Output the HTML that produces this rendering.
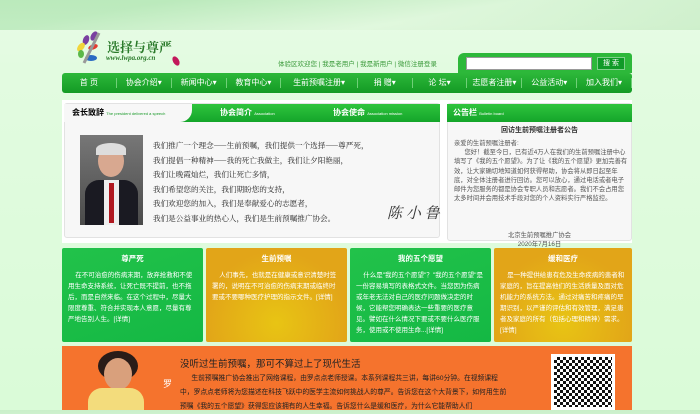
<!DOCTYPE html><html><head><meta charset="utf-8"><style>
*{margin:0;padding:0;box-sizing:border-box}
body{width:700px;height:410px;overflow:hidden;background:linear-gradient(#c9efc9 0,#e6fbe4 25px,#e2fbe0 70px,#dafbd8 100%);font-family:"Liberation Sans","Noto Sans CJK SC",sans-serif;position:relative}
.a{position:absolute}
.nav{left:62px;top:73px;width:570px;height:20px;background:linear-gradient(#2db83a,#139a24);border-radius:3px;color:#fff;font-size:8px;display:flex;align-items:center}
.nav span{flex:1;text-align:center;border-right:1px solid #6fd078;line-height:10px}
.box{left:62px;top:100px;width:570px;height:143px;background:#fff}
.panel{background:#f7f7f7;border:1px solid #e2e2e2;border-radius:3px}
.hd{height:18px;background:linear-gradient(#2fc43d,#14a52a);color:#fff;font-size:8px;font-weight:bold;line-height:18px}
.hd small{font-size:4px;font-weight:normal}
.card{top:248px;width:141px;height:94px;border-radius:2px;color:#fff;font-size:6.5px;line-height:11px;padding:5px 6px}
.card b{display:block;text-align:center;font-size:7.5px;margin-bottom:6px}
.g{background:linear-gradient(160deg,#22c24a,#14b844)}
.o{background:radial-gradient(circle at 50% 80%,#e8c414,#e2a518 70%)}
.poem{font-family:"Noto Serif CJK SC",serif;font-size:7.6px;color:#222;line-height:14.6px}
</style></head><body>
<div class="a" style="left:0;top:0;width:700px;height:30px;background:linear-gradient(170deg,#b7e8b8 20%,#dff7dc 60%,#c8ecc5);opacity:.8"></div>
<svg class="a" style="left:72px;top:30px" width="40" height="36"><ellipse cx="22" cy="6" rx="3" ry="5" fill="#7a3fa0" transform="rotate(30 22 6)"/><ellipse cx="14" cy="10" rx="3" ry="5" fill="#7a3fa0" transform="rotate(20 14 10)"/><ellipse cx="9" cy="17" rx="3" ry="5" fill="#f1d53b" transform="rotate(40 9 17)"/><ellipse cx="9" cy="24" rx="3" ry="4" fill="#5bb84a"/><ellipse cx="21" cy="17" rx="5" ry="2.5" fill="#e43a2f" transform="rotate(-20 21 17)"/><ellipse cx="19" cy="28" rx="6" ry="3" fill="#2a6bc3"/><path d="M27 3 L12 33" stroke="#999" stroke-width="3"/></svg>
<div class="a" style="left:107px;top:37px;font-size:13px;color:#2a7a2a;font-family:'Noto Serif CJK SC',serif;font-weight:bold">选择与尊严</div>
<div class="a" style="left:106px;top:54px;font-size:7px;color:#2a7a2a;font-style:italic;font-weight:bold;font-family:'Liberation Serif',serif">www.lwpa.org.cn</div>
<svg class="a" style="left:170px;top:55px" width="12" height="12"><ellipse cx="6" cy="6" rx="3" ry="5" fill="#c2185b" transform="rotate(-30 6 6)"/></svg>
<div class="a" style="left:278px;top:58px;font-size:6.5px;color:#3a9a3a">体验区欢迎您 | 我是老用户 | 我是新用户 | 微信注册登录</div>
<div class="a" style="left:458px;top:53px;width:174px;height:20px;background:#2db83a;border-radius:6px 3px 0 0"></div>
<div class="a" style="left:466px;top:57px;width:126px;height:13px;background:#fff;border:1px solid #999"></div>
<div class="a" style="left:597px;top:57px;width:28px;height:13px;background:#109a28;border:1px solid #7fd08a;color:#fff;font-size:7px;text-align:center;line-height:11px">搜 索</div>
<div class="a nav"><span>首 页</span><span>协会介绍▾</span><span>新闻中心▾</span><span>教育中心▾</span><span style="flex:1.4">生前预嘱注册▾</span><span>捐 赠▾</span><span>论 坛▾</span><span>志愿者注册▾</span><span>公益活动▾</span><span>加入我们▾</span></div>
<div class="a box"></div>
<div class="a panel" style="left:64px;top:103px;width:376px;height:135px"></div>
<div class="a" style="left:64px;top:104px;width:376px;height:18px;background:linear-gradient(#2fc43d,#14a52a)"></div>
<div class="a" style="left:64px;top:104px;width:128px;height:18px;background:#f7f7f7;border-radius:0 0 12px 0;font-size:8px;font-weight:bold;line-height:18px;padding-left:8px">会长致辞 <small style="font-size:4px;color:#1a9a2a;font-weight:normal">The president delivered a speech</small></div>
<div class="a" style="left:220px;top:104px;color:#fff;font-size:8px;font-weight:bold;line-height:18px">协会简介 <small style="font-size:4px;font-weight:normal">Association</small></div>
<div class="a" style="left:333px;top:104px;color:#fff;font-size:8px;font-weight:bold;line-height:18px">协会使命 <small style="font-size:4px;font-weight:normal">Association mission</small></div>
<div class="a" style="left:80px;top:135px;width:63px;height:90px;background:linear-gradient(#777,#4a4a4a)"><div class="a" style="left:18px;top:10px;width:26px;height:32px;border-radius:50%;background:#d8a890"></div><div class="a" style="left:16px;top:8px;width:30px;height:12px;border-radius:50% 50% 0 0;background:#ddd"></div><div class="a" style="left:5px;top:45px;width:53px;height:45px;background:#1a1a22;border-radius:14px 14px 0 0"></div><div class="a" style="left:24px;top:45px;width:15px;height:45px;background:#eee"></div><div class="a" style="left:29px;top:48px;width:5px;height:40px;background:#b01820"></div></div>
<div class="a poem" style="left:153px;top:139px;white-space:nowrap">我们推广一个理念——生前预嘱，我们提供一个选择——尊严死，<br>我们提倡一种精神——我的死亡我做主，我们让夕阳艳丽，<br>我们让晚霞灿烂，我们让死亡多情，<br>我们希望您的关注，我们期盼您的支持，<br>我们欢迎您的加入，我们是奉献爱心的志愿者，<br>我们是公益事业的热心人，我们是生前预嘱推广协会。</div>
<div class="a" style="left:387px;top:202px;font-size:15px;font-family:'Noto Serif CJK SC',serif;color:#333;font-style:italic">陈 小 鲁</div>
<div class="a panel" style="left:447px;top:103px;width:185px;height:138px"></div>
<div class="a hd" style="left:447px;top:104px;width:185px;padding-left:6px">公告栏 <small>Bulletin board</small></div>
<div class="a" style="left:447px;top:125px;width:185px;text-align:center;font-size:7px;font-weight:bold;color:#333">回访生前预嘱注册者公告</div>
<div class="a" style="left:454px;top:139px;width:174px;font-size:6.3px;line-height:9.2px;color:#555">亲爱的生前预嘱注册者:<br>&nbsp;&nbsp;&nbsp;&nbsp;&nbsp;&nbsp;您好！截至今日，已有近4万人在我们的生前预嘱注册中心填写了《我的五个愿望》。为了让《我的五个愿望》更加完善有效，让大家确切地知道如何获得帮助，协会将从即日起至年底，对全体注册者进行回访。您可以放心，通过电话或者电子邮件为您服务的都是协会专职人员和志愿者。我们不会占用您太多时间并会用技术手段对您的个人资料实行严格监控。</div>
<div class="a" style="left:447px;top:231px;width:185px;text-align:center;font-size:6.3px;line-height:9px;color:#555">北京生前预嘱推广协会<br>2020年7月16日</div>
<div class="a card g" style="left:62px"><b>尊严死</b>&nbsp;&nbsp;&nbsp;&nbsp;在不可治愈的伤病末期，放弃抢救和不使用生命支持系统，让死亡既不提前，也不拖后，而是自然来临。在这个过程中，尽量大限度尊重、符合并实现本人意愿，尽量有尊严地告别人生。[详情]</div>
<div class="a card o" style="left:206px"><b>生前预嘱</b>&nbsp;&nbsp;&nbsp;&nbsp;人们事先，也就是在健康或意识清楚时签署的，说明在不可治愈的伤病末期或临终时要或不要哪种医疗护理的指示文件。[详情]</div>
<div class="a card g" style="left:350px"><b>我的五个愿望</b>&nbsp;&nbsp;&nbsp;&nbsp;什么是"我的五个愿望"？"我的五个愿望"是一份容易填写的表格式文件。当您因为伤病或年老无法对自己的医疗问题做决定的时候，它能帮您明确表达一些重要的医疗意见。譬如在什么情况下要或不要什么医疗服务，使用或不使用生命...[详情]</div>
<div class="a card o" style="left:494px;width:138px"><b>缓和医疗</b>&nbsp;&nbsp;&nbsp;&nbsp;是一种提供给患有危及生命疾病的患者和家庭的，旨在提高他们的生活质量及面对危机能力的系统方法。通过对痛苦和疼痛的早期识别，以严谨的评估和有效管理，满足患者及家庭的所有（包括心理和精神）需求。[详情]</div>
<div class="a" style="left:62px;top:346px;width:570px;height:64px;background:#f5732d"></div>
<div class="a" style="left:98px;top:351px;width:40px;height:30px;border-radius:50%;background:#2a1c18"></div>
<div class="a" style="left:104px;top:358px;width:28px;height:32px;border-radius:50%;background:#d9a07c"></div>
<div class="a" style="left:88px;top:388px;width:56px;height:22px;border-radius:14px 14px 0 0;background:#f3dc7c"></div>
<div class="a" style="left:163px;top:377px;color:#fff;font-size:9px">罗</div>
<div class="a" style="left:180px;top:356px;font-size:9.5px;color:#222">没听过生前预嘱，那可不算过上了现代生活</div>
<div class="a" style="left:180px;top:372px;width:330px;font-size:6.8px;line-height:14px;color:#222">&nbsp;&nbsp;&nbsp;&nbsp;&nbsp;&nbsp;生前预嘱推广协会推出了网络课程，由罗点点老师授课。本系列课程共三讲，每讲60分钟。在视频课程中，罗点点老师将为您描述在科技飞跃中的医学主流如何挑战人的尊严。告诉您在这个大背景下，如何用生前预嘱《我的五个愿望》获得您应该拥有的人生幸福。告诉您什么是缓和医疗，为什么它能帮助人们</div>
<div class="a" style="left:551px;top:354px;width:64px;height:56px;background:#fff;padding:3px"><div style="width:100%;height:100%;background:repeating-conic-gradient(#111 0 25%,#fff 0 50%) 0 0/6px 6px"></div></div>
</body></html>
